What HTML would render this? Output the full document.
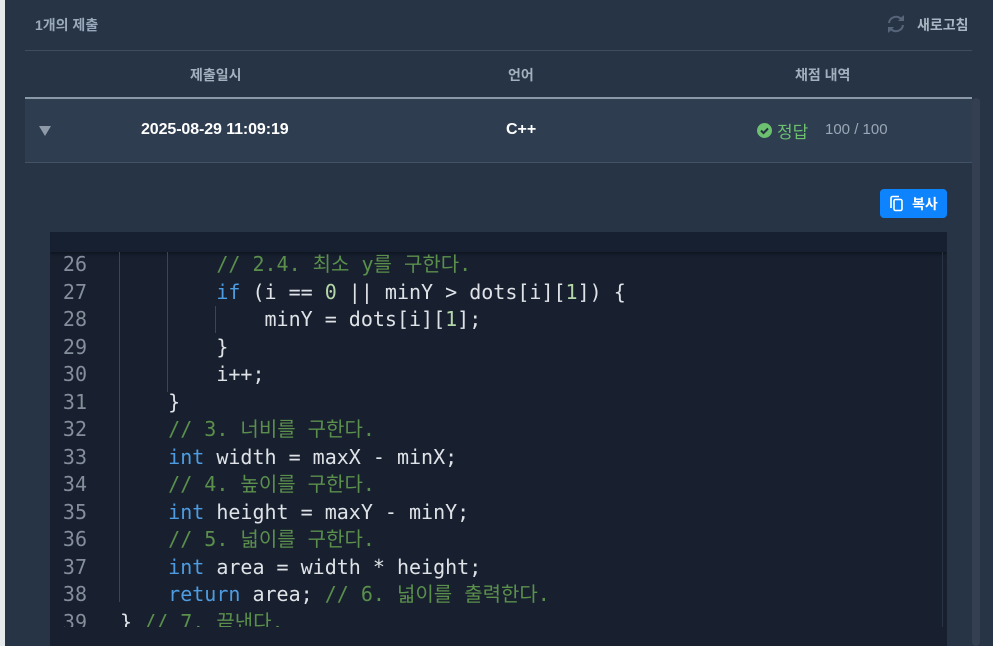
<!DOCTYPE html>
<html><head><meta charset="utf-8"><style>
*{margin:0;padding:0;box-sizing:border-box}
body{width:993px;height:646px;overflow:hidden;background:#263445;position:relative;font-family:"Liberation Sans","Noto Sans CJK KR",sans-serif}
.abs{position:absolute}
.code{position:absolute;left:50px;top:232px;width:897px;height:414px;background:#18202f;overflow:hidden}
.ln{position:absolute;left:0;width:37px;text-align:right;color:#858e9b}
.line{position:absolute;left:70px;white-space:pre;color:#dfe3e8}
.code div{font-family:"DejaVu Sans Mono","Noto Sans CJK KR",monospace;font-size:20px;height:27.5px;line-height:27.5px}
.c{color:#5a8f4c}.k{color:#4d9be0}.n{color:#b5d7a8}
</style></head><body>
<div class="abs" style="left:0;top:0;width:5px;height:646px;background:#e6e9ec"></div>
<div class="abs" style="left:35px;top:15px;font-size:14px;color:#9aa9bb;font-weight:bold">1개의 제출</div>
<svg class="abs" style="left:885px;top:14px" width="22" height="20" viewBox="0 0 22 20"><path d="M4 9a7 7 0 0 1 12-4l2-2M18 11a7 7 0 0 1-12 4l-2 2" stroke="#56657a" stroke-width="2" fill="none"/><path d="M19 1v6h-6z M3 19v-6h6z" fill="#56657a"/></svg>
<div class="abs" style="left:917px;top:15px;font-size:14px;color:#aab6c4;font-weight:bold">새로고침</div>
<div class="abs" style="left:25px;top:50px;width:947px;height:1px;background:#3f4d5f"></div>
<div class="abs" style="left:190px;top:65px;font-size:14px;color:#a3b0be;font-weight:bold">제출일시</div>
<div class="abs" style="left:508px;top:65px;font-size:14px;color:#a3b0be;font-weight:bold">언어</div>
<div class="abs" style="left:795px;top:65px;font-size:14px;color:#a3b0be;font-weight:bold">채점 내역</div>
<div class="abs" style="left:25px;top:97px;width:947px;height:66px;background:#2e3d50;border-top:2px solid #8a98a8;border-bottom:1px solid #445264"></div>
<div class="abs" style="left:39px;top:126px;width:0;height:0;border-left:6px solid transparent;border-right:6px solid transparent;border-top:10px solid #8f9aa8"></div>
<div class="abs" style="left:141px;top:121px;font-size:16px;color:#fff;font-weight:bold;letter-spacing:-0.1px">2025-08-29 11:09:19</div>
<div class="abs" style="left:506px;top:121px;font-size:16px;color:#fff;font-weight:bold">C++</div>
<svg class="abs" style="left:757px;top:123px" width="15" height="15" viewBox="0 0 15 15"><circle cx="7.5" cy="7.5" r="7.5" fill="#6cc070"/><path d="M4 7.6l2.5 2.5 4.5-4.6" stroke="#24313f" stroke-width="2" fill="none"/></svg>
<div class="abs" style="left:777px;top:118px;font-size:17px;color:#6cc070">정답</div>
<div class="abs" style="left:825px;top:121px;font-size:15px;color:#9aa7b6">100 / 100</div>
<div class="abs" style="left:972px;top:98px;width:8px;height:548px;background:#343f52;border-radius:4px"></div>
<div class="abs" style="left:880px;top:189px;width:67px;height:29px;background:#0d84fe;border-radius:4px"></div>
<svg class="abs" style="left:888px;top:195px" width="18" height="18" viewBox="0 0 18 18"><path d="M3 13V3a1.5 1.5 0 0 1 1.5-1.5H11" stroke="#fff" stroke-width="1.6" fill="none"/><rect x="6" y="4.5" width="8" height="11" rx="1.5" stroke="#fff" stroke-width="1.6" fill="none"/></svg>
<div class="abs" style="left:912px;top:194px;font-size:14px;color:#fff;font-weight:bold">복사</div>
<div class="code">
<div class="abs" style="left:0;top:0;width:897px;height:20px;background:#172030;box-shadow:0 2px 3px #0e1520"></div>
<div class="abs" style="left:69px;top:20px;width:1px;height:350px;background:#3b4556"></div>
<div class="abs" style="left:117px;top:20px;width:1px;height:140px;background:#3b4556"></div>
<div class="abs" style="left:165px;top:74px;width:1px;height:27px;background:#3b4556"></div>
<div class="abs" style="left:892px;top:20px;width:1px;height:390px;background:#2a3344"></div>
<div style="position:absolute;left:0;top:19px;width:900px">
<div class="ln" style="top:0">26</div><div class="line" style="top:0">        <span class="c">// 2.4. 최소 y를 구한다.</span></div>
<div class="ln" style="top:27.5px">27</div><div class="line" style="top:27.5px">        <span class="k">if</span> (i == <span class="n">0</span> || minY &gt; dots[i][<span class="n">1</span>]) {</div>
<div class="ln" style="top:55px">28</div><div class="line" style="top:55px">            minY = dots[i][<span class="n">1</span>];</div>
<div class="ln" style="top:82.5px">29</div><div class="line" style="top:82.5px">        }</div>
<div class="ln" style="top:110px">30</div><div class="line" style="top:110px">        i++;</div>
<div class="ln" style="top:137.5px">31</div><div class="line" style="top:137.5px">    }</div>
<div class="ln" style="top:165px">32</div><div class="line" style="top:165px">    <span class="c">// 3. 너비를 구한다.</span></div>
<div class="ln" style="top:192.5px">33</div><div class="line" style="top:192.5px">    <span class="k">int</span> width = maxX - minX;</div>
<div class="ln" style="top:220px">34</div><div class="line" style="top:220px">    <span class="c">// 4. 높이를 구한다.</span></div>
<div class="ln" style="top:247.5px">35</div><div class="line" style="top:247.5px">    <span class="k">int</span> height = maxY - minY;</div>
<div class="ln" style="top:275px">36</div><div class="line" style="top:275px">    <span class="c">// 5. 넓이를 구한다.</span></div>
<div class="ln" style="top:302.5px">37</div><div class="line" style="top:302.5px">    <span class="k">int</span> area = width * height;</div>
<div class="ln" style="top:330px">38</div><div class="line" style="top:330px">    <span class="k">return</span> area; <span class="c">// 6. 넓이를 출력한다.</span></div>
<div class="ln" style="top:357.5px">39</div><div class="line" style="top:357.5px">} <span class="c">// 7. 끝낸다.</span></div>
</div>
<div class="abs" style="left:0;top:395px;width:897px;height:20px;background:#18202f"></div>
</div>
</body></html>
